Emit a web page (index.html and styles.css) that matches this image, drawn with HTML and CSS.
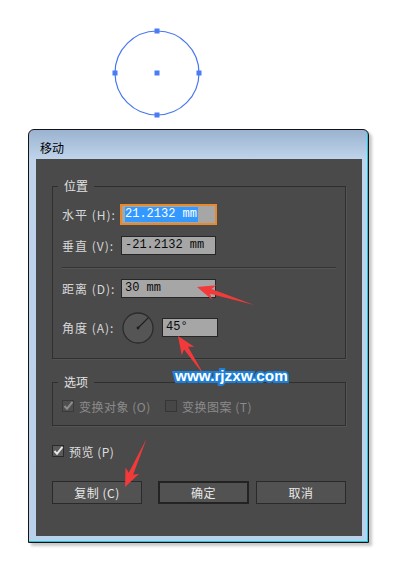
FILE: index.html
```html
<!DOCTYPE html>
<html>
<head>
<meta charset="utf-8">
<link rel="stylesheet" href="styles.css">
</head>
<body>
<div class="page">
  <svg class="shape" width="395" height="129" viewBox="0 0 395 129">
    <circle cx="157" cy="73" r="42" fill="none" stroke="#4677f0" stroke-width="1.2"/>
    <rect x="154.5" y="28.5" width="5" height="5" fill="#4a7cf6"/>
    <rect x="154.5" y="112.5" width="5" height="5" fill="#4a7cf6"/>
    <rect x="112.5" y="70.5" width="5" height="5" fill="#4a7cf6"/>
    <rect x="196.5" y="70.5" width="5" height="5" fill="#4a7cf6"/>
    <rect x="154.5" y="70.5" width="5" height="5" fill="#4a7cf6"/>
  </svg>

  <div class="dialog">
    <div class="titlebar">移动</div>
    <div class="frame">
      <div class="content">
        <fieldset class="group pos">
          <legend>位置</legend>
          <div class="row">
            <span class="lbl">水平 (H):</span>
            <span class="field focus"><span class="sel">21.2132 mm</span></span>
          </div>
          <div class="row">
            <span class="lbl">垂直 (V):</span>
            <span class="field">-21.2132 mm</span>
          </div>
          <div class="sep"></div>
          <div class="row">
            <span class="lbl">距离 (D):</span>
            <span class="field">30 mm</span>
          </div>
          <div class="row angle">
            <span class="lbl">角度 (A):</span>
            <svg class="dial" width="32" height="32" viewBox="0 0 32 32">
              <circle cx="16" cy="16" r="15" fill="#555555" stroke="#2b2b2b" stroke-width="1.3"/>
              <line x1="16" y1="16" x2="26.4" y2="5.6" stroke="#1e1e1e" stroke-width="1.2"/>
              <circle cx="16" cy="16" r="1.4" fill="#1e1e1e"/>
            </svg>
            <span class="field small">45°</span>
          </div>
        </fieldset>

        <fieldset class="group opts">
          <legend>选项</legend>
          <div class="optrow">
            <span class="opt first disabled">
              <svg class="cb" width="12" height="12" viewBox="0 0 12 12">
                <rect x="0.5" y="0.5" width="11" height="11" fill="#4f4f4f" stroke="#3a3a3a"/>
                <path d="M2.5 6 L5 8.8 L10.5 1.8" fill="none" stroke="#8e8e8e" stroke-width="2"/>
              </svg>
              <span>变换对象 (O)</span>
            </span>
            <span class="opt disabled">
              <svg class="cb" width="12" height="12" viewBox="0 0 12 12">
                <rect x="0.5" y="0.5" width="11" height="11" fill="#474747" stroke="#363636"/>
              </svg>
              <span>变换图案 (T)</span>
            </span>
          </div>
        </fieldset>

        <div class="preview">
          <svg class="cb" width="12" height="12" viewBox="0 0 12 12">
            <rect x="0.5" y="0.5" width="11" height="11" fill="#5a5a5a" stroke="#2a2a2a"/>
            <path d="M2.5 6 L5 8.8 L10.5 1.8" fill="none" stroke="#e6e6e6" stroke-width="2"/>
          </svg>
          <span>预览 (P)</span>
        </div>

        <div class="buttons">
          <div class="btn">复制 (C)</div>
          <div class="btn default">确定</div>
          <div class="btn last">取消</div>
        </div>
      </div>
    </div>
  </div>

  <svg class="overlay" width="395" height="571" viewBox="0 0 395 571">
    <g transform="translate(197 287) rotate(17.5)">
      <polygon points="0,0 18,-7.5 14.5,-2.4 60,0 14.5,2.4 18,7.5" fill="#f23a3a"/>
    </g>
    <g transform="translate(178 336) rotate(56.3)">
      <polygon points="0,0 18,-7.5 14.5,-2.4 48,0 14.5,2.4 18,7.5" fill="#f23a3a"/>
    </g>
    <g transform="translate(125 487) rotate(-65.9)">
      <polygon points="0,0 18,-7.5 14.5,-2.4 53,0 14.5,2.4 18,7.5" fill="#f23a3a"/>
    </g>
  </svg>
  <div class="watermark">www.rjzxw.com</div>
</div>
</body>
</html>
```

FILE: styles.css
```css
html, body {
  margin: 0;
  padding: 0;
  background: #ffffff;
}

.page {
  position: relative;
  width: 395px;
  height: 571px;
  overflow: hidden;
  font-family: "Noto Sans CJK SC", "Noto Sans", sans-serif;
  font-size: 12px;
}

.shape {
  display: block;
}

.dialog {
  margin-left: 28px;
  width: 341px;
  height: 414px;
  box-sizing: border-box;
  border: 1px solid #141414;
  border-radius: 6px 6px 0 0;
  background: linear-gradient(to bottom, #9bb3d0 0px, #bfd4eb 29px, #b9d1ea 100%);
  box-shadow: inset -1px -1px 0 #22c4da, 3px 3px 3px rgba(0, 0, 0, 0.22);
}

.titlebar {
  height: 29px;
  box-sizing: border-box;
  padding: 11px 0 0 11px;
  line-height: 14px;
  font-size: 12px;
  color: #000;
}

.frame {
  padding: 0 6px 6px 7px;
}

.content {
  height: 377px;
  box-sizing: border-box;
  background: #4a4a4a;
  padding: 19px 16px 0;
  color: #dadada;
}

.group {
  margin: 0;
  min-width: 0;
  border: 1px solid #2f2f2f;
  box-shadow: 1px 1px 0 rgba(255, 255, 255, 0.06);
}

.group legend {
  margin-left: -4px;
  padding: 0 6px;
  line-height: 16px;
  font-size: 12px;
  color: #e2e2e2;
}

.pos {
  padding: 11px 9px 15px;
}

.row {
  display: flex;
  align-items: center;
  height: 19px;
}

.row + .row {
  margin-top: 12px;
}

.row.angle {
  height: 31px;
  margin-top: 14px;
}

.lbl {
  width: 59px;
  flex: none;
  letter-spacing: 1px;
  white-space: nowrap;
  line-height: 19px;
  color: #d8d8d8;
}

.field {
  display: block;
  width: 95px;
  height: 19px;
  box-sizing: border-box;
  border: 1px solid #262626;
  background: #a6a6a6;
  font-family: "Liberation Mono", monospace;
  font-size: 12px;
  line-height: 17px;
  padding-left: 3px;
  color: #0a0a0a;
  white-space: nowrap;
}

.field.focus {
  border-color: #e8892c;
  box-shadow: 0 0 0 1px #e8892c;
}

.field.small {
  width: 56px;
  margin-left: 8px;
}

.sel {
  background: #3399ff;
  color: #ffffff;
  padding: 0 1px 1px 0;
}

.dial {
  display: block;
  margin-left: 1px;
  flex: none;
}

.sep {
  margin: 12px 0 10px;
  border-top: 1px solid #343434;
  border-bottom: 1px solid #545454;
}

.opts {
  margin-top: 15px;
  padding: 9px 9px 12px;
}

.optrow {
  display: flex;
  align-items: center;
  height: 14px;
}

.opt {
  display: flex;
  align-items: center;
  white-space: nowrap;
  letter-spacing: 0.5px;
}

.opt.first {
  width: 103px;
}

.opt.disabled {
  color: #8a8a8a;
}

.cb {
  display: block;
  flex: none;
  margin-right: 5px;
}

.preview {
  display: flex;
  align-items: center;
  height: 14px;
  margin-top: 18px;
  color: #dedede;
  letter-spacing: 0.5px;
}

.buttons {
  display: flex;
  margin-top: 23px;
}

.btn {
  width: 90px;
  height: 23px;
  box-sizing: border-box;
  border: 1px solid #2a2a2a;
  background: #525252;
  color: #e8e8e8;
  display: flex;
  align-items: center;
  justify-content: center;
  font-size: 12px;
  letter-spacing: 0.5px;
}

.btn.default {
  width: 91px;
  border: 2px solid #232323;
  margin-left: 16px;
}

.btn.last {
  margin-left: 7px;
}

.overlay {
  position: absolute;
  left: 0;
  top: 0;
  pointer-events: none;
}

.watermark {
  position: absolute;
  left: 175px;
  top: 367px;
  font-family: "Liberation Sans", Arial, sans-serif;
  font-weight: bold;
  font-size: 15.3px;
  line-height: 18px;
  color: #ffffff;
  -webkit-text-stroke: 4px #1c7fd8;
  paint-order: stroke fill;
}
```
